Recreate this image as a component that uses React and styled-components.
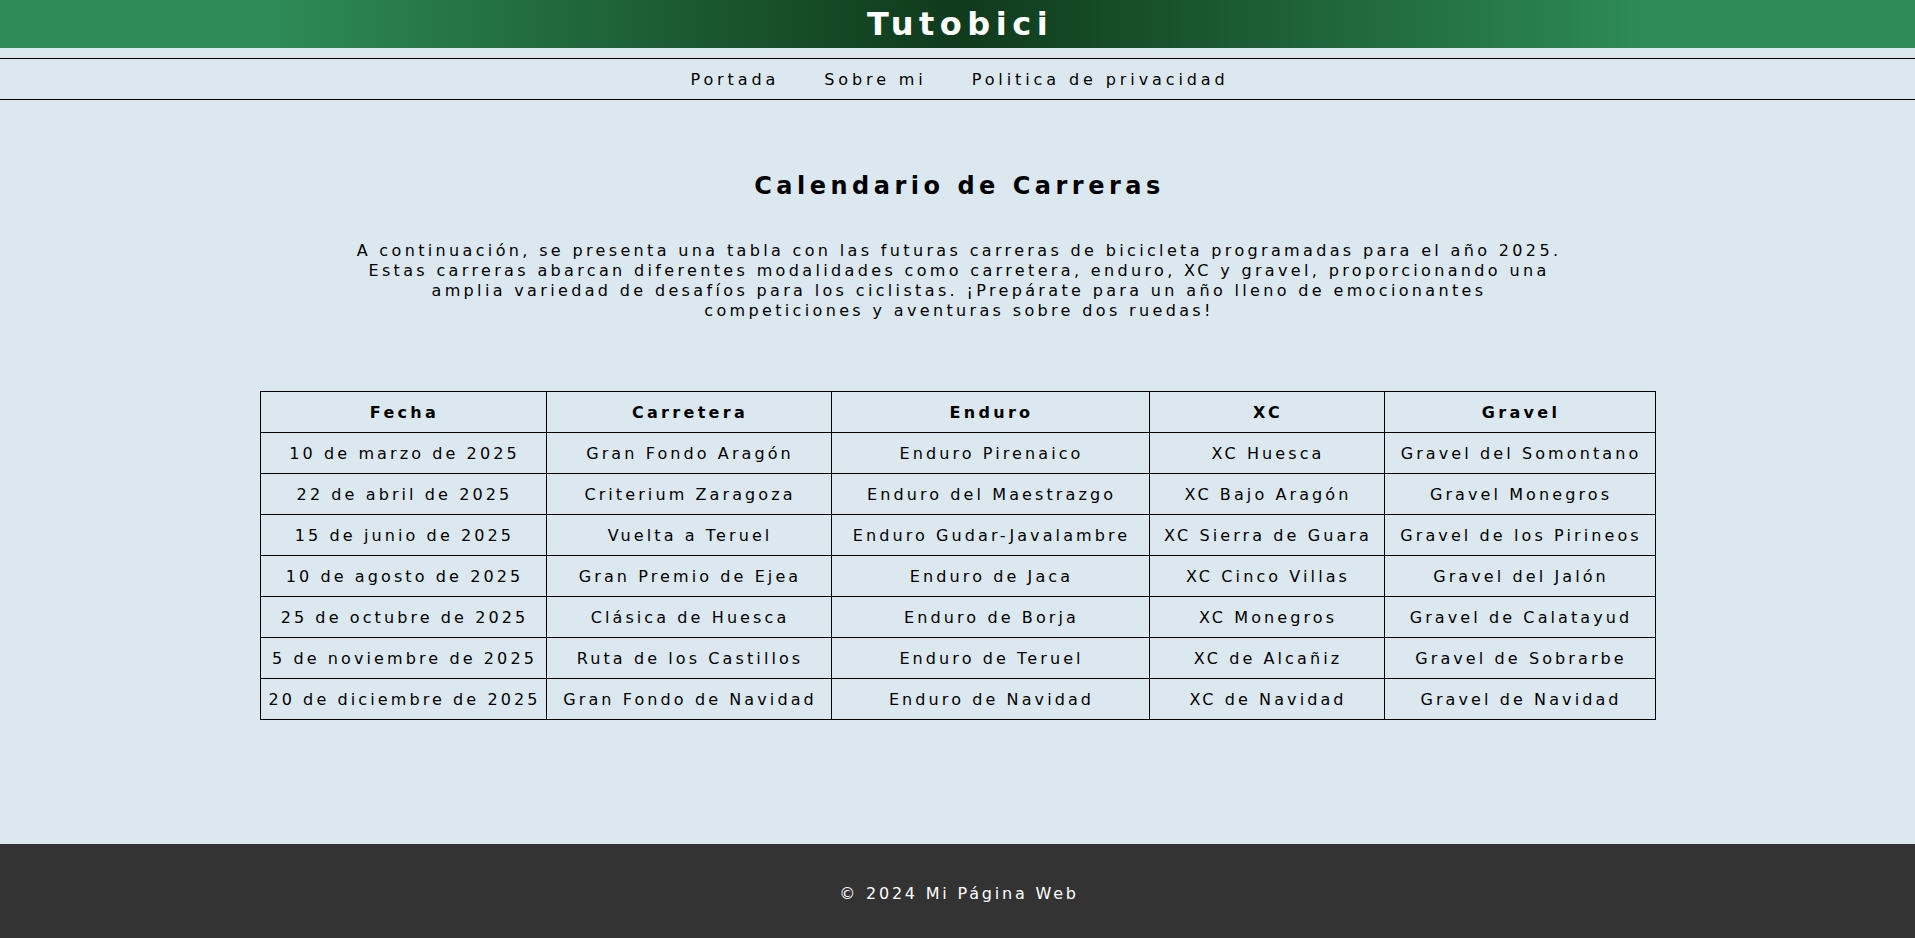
import React from 'react';
import styled, { createGlobalStyle } from 'styled-components';

const GlobalStyle = createGlobalStyle`
  * {
    box-sizing: border-box;
  }
  body {
    margin: 0;
    background: #dce8ef;
    color: #000;
    font-family: 'DejaVu Sans', 'Noto Sans', sans-serif;
  }
`;

const Page = styled.div`
  min-height: 100vh;
  display: flex;
  flex-direction: column;
`;

const Header = styled.header`
  height: 48px;
  display: flex;
  align-items: center;
  justify-content: center;
  background: linear-gradient(
    to right,
    #2e8b57 0%,
    #2e8b57 14%,
    #0f3a1b 50%,
    #2e8b57 86%,
    #2e8b57 100%
  );
`;

const Title = styled.h1`
  margin: 0 0 0 5px;
  color: #fff;
  font-size: 32px;
  font-weight: 700;
  letter-spacing: 5.5px;
  line-height: 46px;
`;

const Nav = styled.nav`
  margin-top: 10px;
  height: 42px;
  border-top: 1px solid #000;
  border-bottom: 1px solid #000;
  display: flex;
  align-items: center;
  justify-content: center;
`;

const NavList = styled.ul`
  display: flex;
  gap: 45px;
  margin: 0;
  padding: 0 0 0 4px;
  list-style: none;
`;

const NavItem = styled.li`
  font-size: 16px;
  letter-spacing: 3.9px;
  cursor: pointer;
`;

const Main = styled.main`
  flex: 1;
  display: flex;
  flex-direction: column;
  align-items: center;
  padding: 72px 0 124px;
`;

const Heading = styled.h2`
  margin: 0 0 0 4px;
  font-size: 24px;
  font-weight: 700;
  line-height: 28px;
  letter-spacing: 4.5px;
`;

const Intro = styled.p`
  margin: 41px 0 70px 3px;
  font-size: 16px;
  line-height: 20px;
  letter-spacing: 3.35px;
  text-align: center;
  white-space: nowrap;
`;

const Table = styled.table`
  width: 1395px;
  border-collapse: collapse;
  table-layout: fixed;
`;

const Cell = styled.td`
  height: 41px;
  padding: 0 0 0 3px;
  border: 1px solid #000;
  text-align: center;
  font-size: 16px;
  letter-spacing: 3.1px;
  white-space: nowrap;
`;

const HeadCell = styled(Cell).attrs({ as: 'th' })`
  font-weight: 700;
  letter-spacing: 3.3px;
`;

const Footer = styled.footer`
  background: #333;
  color: #fff;
  text-align: center;
  padding: 40px 0 35px 3px;
  font-size: 16px;
  line-height: 20px;
  font-weight: 500;
  letter-spacing: 2.8px;
`;

const columns = [
  { name: 'Fecha', width: 286 },
  { name: 'Carretera', width: 285 },
  { name: 'Enduro', width: 318 },
  { name: 'XC', width: 235 },
  { name: 'Gravel', width: 271 },
];

const races = [
  ['10 de marzo de 2025', 'Gran Fondo Aragón', 'Enduro Pirenaico', 'XC Huesca', 'Gravel del Somontano'],
  ['22 de abril de 2025', 'Criterium Zaragoza', 'Enduro del Maestrazgo', 'XC Bajo Aragón', 'Gravel Monegros'],
  ['15 de junio de 2025', 'Vuelta a Teruel', 'Enduro Gudar-Javalambre', 'XC Sierra de Guara', 'Gravel de los Pirineos'],
  ['10 de agosto de 2025', 'Gran Premio de Ejea', 'Enduro de Jaca', 'XC Cinco Villas', 'Gravel del Jalón'],
  ['25 de octubre de 2025', 'Clásica de Huesca', 'Enduro de Borja', 'XC Monegros', 'Gravel de Calatayud'],
  ['5 de noviembre de 2025', 'Ruta de los Castillos', 'Enduro de Teruel', 'XC de Alcañiz', 'Gravel de Sobrarbe'],
  ['20 de diciembre de 2025', 'Gran Fondo de Navidad', 'Enduro de Navidad', 'XC de Navidad', 'Gravel de Navidad'],
];

export default function App() {
  return (
    <Page>
      <GlobalStyle />
      <Header>
        <Title>Tutobici</Title>
      </Header>
      <Nav>
        <NavList>
          <NavItem>Portada</NavItem>
          <NavItem>Sobre mi</NavItem>
          <NavItem>Politica de privacidad</NavItem>
        </NavList>
      </Nav>

      <Main>
        <Heading>Calendario de Carreras</Heading>
        <Intro>
          A continuación, se presenta una tabla con las futuras carreras de bicicleta programadas para el año 2025.
          <br />
          Estas carreras abarcan diferentes modalidades como carretera, enduro, XC y gravel, proporcionando una
          <br />
          amplia variedad de desafíos para los ciclistas. ¡Prepárate para un año lleno de emocionantes
          <br />
          competiciones y aventuras sobre dos ruedas!
        </Intro>
        <Table>
          <colgroup>
            {columns.map((c) => (
              <col key={c.name} style={{ width: c.width }} />
            ))}
          </colgroup>
          <thead>
            <tr>
              {columns.map((c) => (
                <HeadCell key={c.name}>{c.name}</HeadCell>
              ))}
            </tr>
          </thead>
          <tbody>
            {races.map((row) => (
              <tr key={row[0]}>
                {row.map((cell) => (
                  <Cell key={cell}>{cell}</Cell>
                ))}
              </tr>
            ))}
          </tbody>
        </Table>
      </Main>

      <Footer>© 2024 Mi Página Web</Footer>
    </Page>
  );
}
